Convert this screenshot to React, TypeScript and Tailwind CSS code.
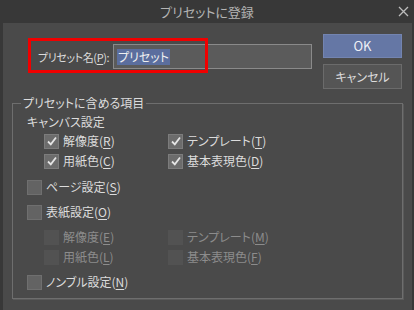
import React from 'react';

type Item = { label: string; key: string; checked?: boolean; disabled?: boolean };

const Check: React.FC<{ checked?: boolean; disabled?: boolean }> = ({ checked, disabled }) => (
  <span
    className={`w-[15px] h-[15px] shrink-0 flex items-center justify-center border ${
      disabled ? 'bg-[#525252] border-[#525252]' : checked ? 'bg-[#6c6c6c] border-[#7c7c7c]' : 'bg-[#636363] border-[#6f6f6f]'
    }`}
  >
    {checked && (
      <svg width="12" height="12" viewBox="0 0 12 12">
        <path d="M2 6.5 L4.8 9.3 L10 2.5" fill="none" stroke="#e4e4e4" strokeWidth="1.8" />
      </svg>
    )}
  </span>
);

const CheckRow: React.FC<{ item: Item; className?: string }> = ({ item, className }) => (
  <div className={`flex items-center gap-[4px] h-[20px] whitespace-nowrap ${className ?? ''}`}>
    <Check checked={item.checked} disabled={item.disabled} />
    <span className={item.disabled ? 'text-[#8c8c8c]' : 'text-[#dcdcdc]'}>
      {item.label}(<u className="underline-offset-2">{item.key}</u>)
    </span>
  </div>
);

const Pair: React.FC<{ left: Item; right: Item }> = ({ left, right }) => (
  <div className="grid grid-cols-[124px_1fr] ml-[17px]">
    <CheckRow item={left} />
    <CheckRow item={right} />
  </div>
);

export default function App() {
  const font = { fontFamily: '"Noto Sans CJK JP", "Noto Sans", sans-serif' };
  return (
    <div
      className="w-[414px] h-[310px] bg-[#383838] flex flex-col text-[12px] leading-[16px] [font-feature-settings:'palt'] overflow-hidden"
      style={font}
    >
      {/* Title bar */}
      <div className="h-[23px] relative flex items-center justify-center text-[13px] text-[#b4b4b4]">
        プリセットに登録
        <svg className="absolute right-[5px] top-[6px]" width="11" height="11" viewBox="0 0 11 11">
          <path d="M1 1 L10 10 M10 1 L1 10" stroke="#bdbdbd" strokeWidth="1.3" />
        </svg>
      </div>

      {/* Body */}
      <div className="flex-1 ml-[3px] mr-[2px] bg-[#4a4a4a] pt-[11px] pl-[9px]">
        <div className="flex">
          <div className="relative pt-[10px] pl-[26px]">
            <div className="flex items-center h-[25px]">
              <span className="w-[75px] shrink-0 whitespace-nowrap text-[11px] tracking-[-0.4px] text-[#dcdcdc]">
                プリセット名(<u className="underline-offset-2">P</u>):
              </span>
              <div className="w-[199px] h-[25px] bg-[#5b5b5b] border border-[#8a8a8a] flex items-center pl-[3px]">
                <span className="bg-[#5b6e9e] text-[#f0f0f0] px-[1px] leading-[16px]">プリセット</span>
              </div>
            </div>
            <div className="absolute left-[16px] top-[4px] w-[180px] h-[35px] border-[3px] border-[#f00000]" />
          </div>
          <div className="ml-[11px] flex flex-col gap-[6px]">
            <button className="w-[79px] h-[24px] bg-[#6577a5] border border-[#7384b0] text-[#eef0f6] text-[13px]">
              OK
            </button>
            <button className="w-[79px] h-[25px] bg-[#555555] border border-[#6b6b6b] text-[#dcdcdc]">
              キャンセル
            </button>
          </div>
        </div>

        <fieldset className="mt-[6px] w-[391px] border border-[#6e6e6e] pl-[8px] pb-[6px] shadow-[1px_1px_0_#5a5a5a]">
          <legend className="px-[2px] text-[#dcdcdc]">プリセットに含める項目</legend>
          <div className="ml-[6px]">
            <div className="h-[18px] mt-[2px] flex items-center text-[#dcdcdc]">キャンバス設定</div>
            <Pair
              left={{ label: '解像度', key: 'R', checked: true }}
              right={{ label: 'テンプレート', key: 'T', checked: true }}
            />
            <Pair
              left={{ label: '用紙色', key: 'C', checked: true }}
              right={{ label: '基本表現色', key: 'D', checked: true }}
            />
            <CheckRow className="mt-[6px]" item={{ label: 'ページ設定', key: 'S' }} />
            <CheckRow className="mt-[5px]" item={{ label: '表紙設定', key: 'O' }} />
            <div className="mt-[5px]">
              <Pair
                left={{ label: '解像度', key: 'E', disabled: true }}
                right={{ label: 'テンプレート', key: 'M', disabled: true }}
              />
              <Pair
                left={{ label: '用紙色', key: 'L', disabled: true }}
                right={{ label: '基本表現色', key: 'F', disabled: true }}
              />
            </div>
            <CheckRow className="mt-[5px]" item={{ label: 'ノンブル設定', key: 'N' }} />
          </div>
        </fieldset>
      </div>
    </div>
  );
}
